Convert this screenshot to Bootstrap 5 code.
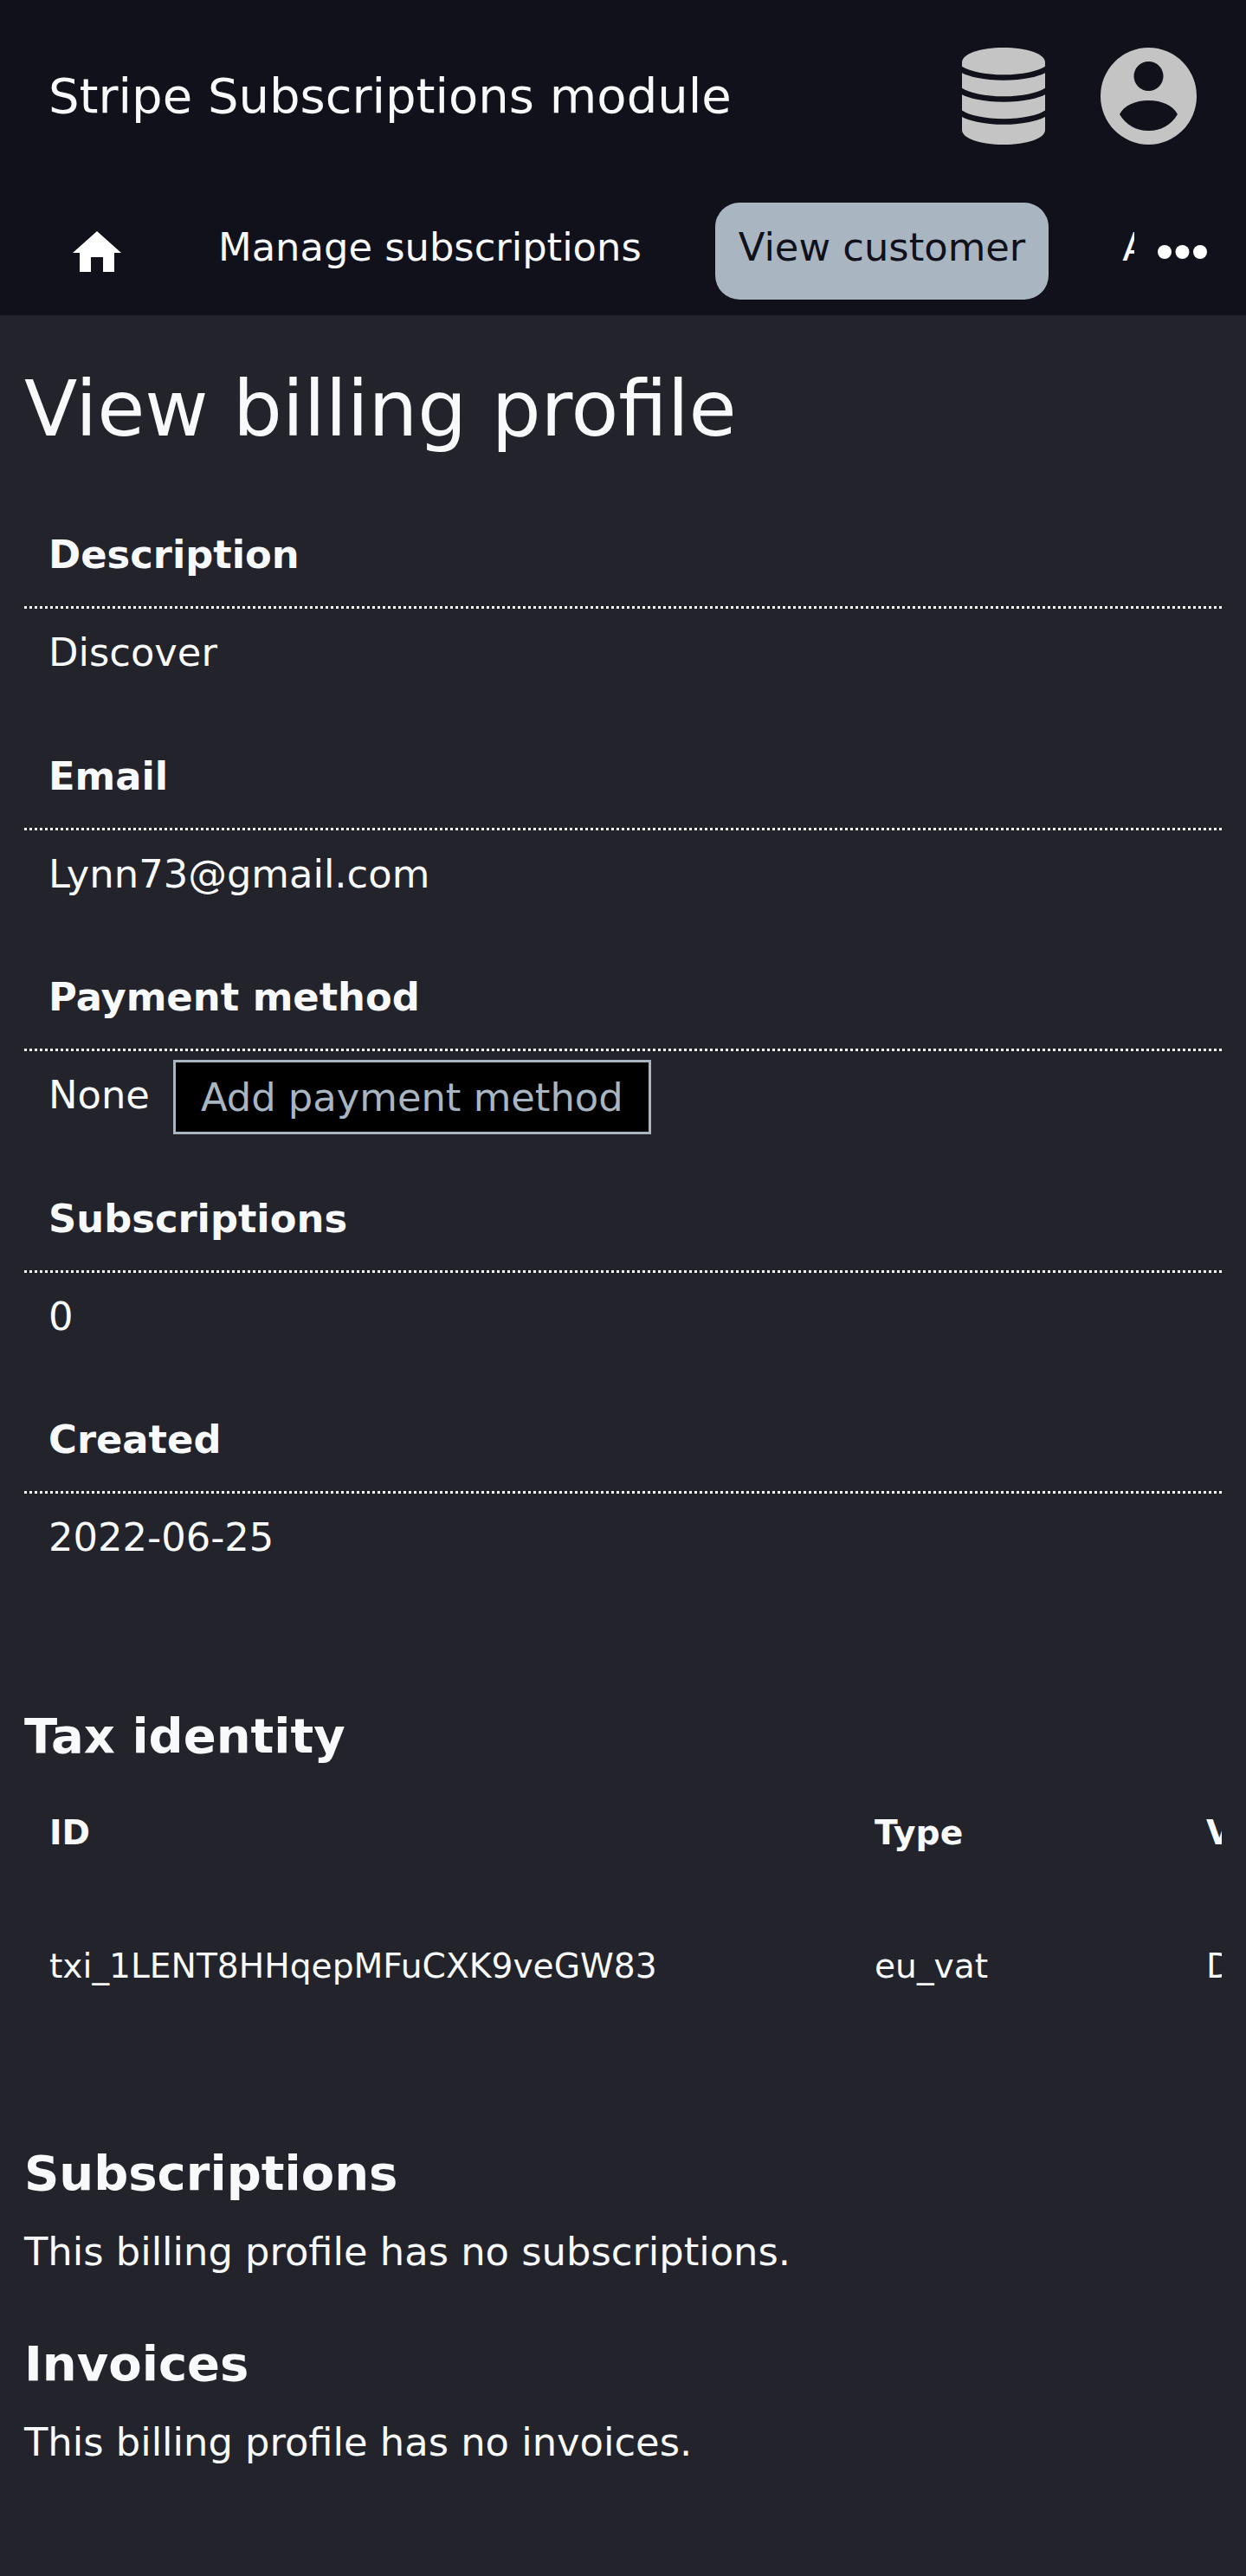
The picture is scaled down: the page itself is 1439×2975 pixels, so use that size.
<!DOCTYPE html>
<html lang="en">
<head>
    <meta charset="UTF-8">
    <meta name="viewport" content="width=device-width, initial-scale=1.0">
    <title>View billing profile</title>
    <link href="https://cdn.jsdelivr.net/npm/bootstrap@5.3.0/dist/css/bootstrap.min.css" rel="stylesheet">
    <style>
        body {
            background-color: #22232b;
            color: #f8f9fa;
            font-family: "DejaVu Sans", sans-serif;
            font-size: 44.8px;
            line-height: 1.5;
            min-height: 100vh;
        }

        .top-bar {
            background-color: #10111a;
            height: 364px;
        }

        .brand-row {
            height: 222px;
            padding: 0 57px;
        }

        .brand-name {
            font-size: 56px;
            color: #f8f9fa;
            text-decoration: none;
            margin-left: -1px;
        }

        .top-icon { height: 112px; display: block; }
        .icon-db { width: 96px; margin-right: 64px; }
        .icon-user { width: 111px; margin-right: 57px; }
        .brand-icons { margin-right: -57px; }

        .tabs-row {
            height: 142px;
            padding: 12px 45px 0 56px;
        }

        .tabs-clip {
            flex: 1 1 auto;
            min-width: 0;
            overflow: hidden;
            margin-right: 27px;
            align-self: flex-start;
        }

        .tabs-list { flex-wrap: nowrap; gap: 58px; }

        .tabs-list .nav-link {
            color: #f8f9fa;
            height: 112px;
            padding: 18px 27px 0;
            font-size: 44.8px;
            line-height: 67px;
            white-space: nowrap;
            border-radius: 28px;
            border: 0;
        }

        .tabs-list .nav-link.active {
            background-color: #a9b6c2;
            color: #10111a;
        }

        .tab-home { width: 111px; display: flex; align-items: center; justify-content: center; }
        .icon-home { width: 56px; height: 47px; display: block; }
        .tabs-list .nav-link.tab-home { padding: 0; }

        .icon-more { width: 57px; height: 16px; display: block; flex: none; margin-top: -16px; }

        .page-body { padding: 0 28px; }

        .page-title {
            font-size: 89.6px;
            font-weight: 400;
            line-height: 1.2;
            margin: 0;
            padding-top: 55px;
            height: 243px;
        }

        .info-list { margin: 0; }

        .info-list dt {
            padding: 0 28px 26px;
            line-height: 67px;
            font-weight: 700;
            border-bottom: 3px dotted #f8f9fa;
        }

        .info-list dd {
            margin: 0 0 75.5px;
            padding: 17px 28px 0;
            height: 84px;
            line-height: 67px;
        }

        .add-btn {
            background-color: #000;
            color: #a9b6c2;
            border: 3px solid #a9b6c2;
            border-radius: 0;
            font-size: 44.8px;
            line-height: 67px;
            padding: 7px 29px;
            height: 86px;
            margin: 4px 0 0 27px;
            white-space: nowrap;
        }

        .sub-title {
            font-size: 56px;
            font-weight: 700;
            line-height: 1.2;
            margin: 0;
        }

        .tax-title { padding-top: 86px; }

        .tax-clip { overflow: hidden; }

        .tax-table {
            --bs-table-bg: transparent;
            --bs-table-color: #f8f9fa;
            width: 1736px;
            max-width: none;
            margin: 2px 0 0;
            font-size: 39.2px;
            table-layout: fixed;
        }

        .tax-table th, .tax-table td {
            padding: 0 29px;
            white-space: nowrap;
            line-height: 59px;
            height: 154px;
            vertical-align: middle;
        }

        .col-id { width: 953px; }
        .col-type { width: 383px; }
        .col-val { width: 400px; }

        .sub-block { margin-top: 128px; }
        .sub-block + .sub-block { margin-top: 0; padding-top: 62px; }
        .sub-block p { margin: 24px 0 0; line-height: 67px; }
    </style>
</head>
<body>

<header class="top-bar">
    <div class="brand-row d-flex align-items-center justify-content-between">
        <a class="brand-name" href="#">Stripe Subscriptions module</a>
        <div class="brand-icons d-flex align-items-center">
            <svg class="top-icon icon-db" viewBox="0 0 96 112" aria-hidden="true">
                <path fill="#c4c4c4" d="M0 17C0 7 21 0 48 0s48 7 48 17v78c0 10-21 17-48 17S0 105 0 95z"/>
                <g fill="none" stroke="#10111a" stroke-width="6.500">
                    <path d="M-4 23C16 38.300 80 38.300 100 23"/>
                    <path d="M-4 48C16 63.300 80 63.300 100 48"/>
                    <path d="M-4 73.500C16 89.500 80 89.500 100 73.500"/>
                </g>
            </svg>
            <svg class="top-icon icon-user" viewBox="0 0 111 112" aria-hidden="true">
                <path fill="#c4c4c4" fill-rule="evenodd" d="M55.500 0a55.500 56 0 1 0 0 112a55.500 56 0 1 0 0-112zM55.500 16a17 17 0 1 1 0 34a17 17 0 1 1 0-34zM22 77C27 67 40 61 55.500 61S84 67 89 77C82 89 70 96 55.500 96S29 89 22 77z"/>
            </svg>
        </div>
    </div>
    <div class="tabs-row d-flex align-items-center">
        <div class="tabs-clip">
            <ul class="nav tabs-list">
                <li class="nav-item">
                    <a class="nav-link tab-home" href="#" aria-label="Home">
                        <svg class="icon-home" viewBox="0 0 56 47" aria-hidden="true">
                            <path fill="#fff" d="M28 0 56 25H48V47H35V30H21V47H8V25H0z"/>
                        </svg>
                    </a>
                </li>
                <li class="nav-item"><a class="nav-link" href="#">Manage subscriptions</a></li>
                <li class="nav-item"><a class="nav-link active" href="#">View customer</a></li>
                <li class="nav-item"><a class="nav-link" href="#">Add billing profile</a></li>
            </ul>
        </div>
        <svg class="icon-more" viewBox="0 0 57 16" aria-hidden="true">
            <circle cx="8" cy="8" r="8" fill="#fff"/><circle cx="28.500" cy="8" r="8" fill="#fff"/><circle cx="49" cy="8" r="8" fill="#fff"/>
        </svg>
    </div>
</header>

<main class="page-body">
    <h1 class="page-title">View billing profile</h1>

    <dl class="info-list">
        <dt>Description</dt>
        <dd>Discover</dd>
        <dt>Email</dt>
        <dd>Lynn73@gmail.com</dd>
        <dt>Payment method</dt>
        <dd class="d-flex align-items-center">None<a class="btn add-btn" href="#">Add payment method</a></dd>
        <dt>Subscriptions</dt>
        <dd>0</dd>
        <dt>Created</dt>
        <dd>2022-06-25</dd>
    </dl>

    <h2 class="sub-title tax-title">Tax identity</h2>
    <div class="tax-clip">
        <table class="table table-borderless tax-table">
            <colgroup><col class="col-id"><col class="col-type"><col class="col-val"></colgroup>
            <thead>
                <tr><th>ID</th><th>Type</th><th>Value</th></tr>
            </thead>
            <tbody>
                <tr><td>txi_1LENT8HHqepMFuCXK9veGW83</td><td>eu_vat</td><td>DE123456789</td></tr>
            </tbody>
        </table>
    </div>

    <section class="sub-block">
        <h2 class="sub-title">Subscriptions</h2>
        <p>This billing profile has no subscriptions.</p>
    </section>
    <section class="sub-block">
        <h2 class="sub-title">Invoices</h2>
        <p>This billing profile has no invoices.</p>
    </section>
</main>

<script src="https://cdn.jsdelivr.net/npm/bootstrap@5.3.0/dist/js/bootstrap.bundle.min.js"></script>
</body>
</html>
